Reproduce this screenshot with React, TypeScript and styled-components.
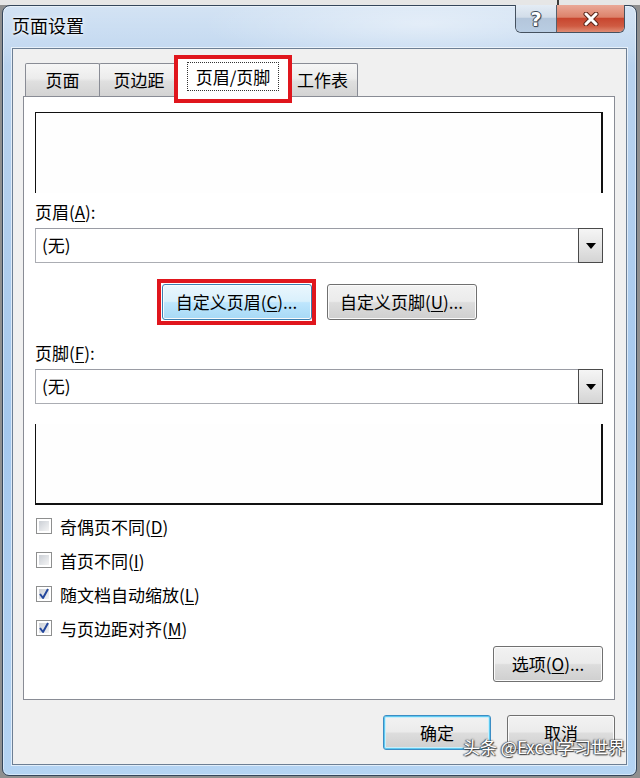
import React from 'react';
import styled, { createGlobalStyle, css } from 'styled-components';

const GlobalStyle = createGlobalStyle`
  html, body { margin: 0; padding: 0; }
  body {
    width: 640px;
    height: 778px;
    overflow: hidden;
    background: #9c9c9c;
    font-family: "Noto Sans CJK SC", "Microsoft YaHei", sans-serif;
    color: #111;
  }
  * { box-sizing: border-box; }
`;

const Page = styled.div`
  position: relative;
  width: 640px;
  height: 778px;
  padding: 5px 3px 2px 2px;
  background:
    linear-gradient(90deg, transparent 557px, #3a3a3a 557px, #3a3a3a 559px, transparent 559px) 0 0 / 100% 5px no-repeat,
    linear-gradient(180deg, #e6e6e6 0, #e6e6e6 5px, #8f8f8f 5px);
`;

const Window = styled.div`
  width: 635px;
  height: 771px;
  border: 1px solid #34465b;
  border-radius: 8px 8px 7px 7px;
  display: flex;
  flex-direction: column;
  background:
    radial-gradient(ellipse 220px 40px at 420px 18px, rgba(255, 255, 255, 0.45), rgba(255, 255, 255, 0)),
    linear-gradient(180deg, rgba(255, 255, 255, 0.35) 0, rgba(255, 255, 255, 0.15) 42px, rgba(255, 255, 255, 0) 60px),
    linear-gradient(180deg, #bcd4ee 0%, #b2cfee 25%, #a4c8ee 55%, #b5d4f3 100%);
  box-shadow: inset 0 0 0 1px rgba(255, 255, 255, 0.45);
`;

const TitleBar = styled.div`
  height: 42px;
  flex: none;
  display: flex;
  justify-content: space-between;
  align-items: flex-start;
  padding: 0 11px 0 9px;
`;

const Title = styled.div`
  margin-top: 7px;
  font-size: 18px;
  line-height: 24px;
  color: #000;
  text-shadow: 0 0 6px rgba(255, 255, 255, 0.9), 0 0 3px rgba(255, 255, 255, 0.9);
`;

const CaptionGroup = styled.div`
  margin-top: -1px;
  display: flex;
  height: 28px;
  border: 1px solid #45515f;
  border-top: none;
  border-radius: 0 0 6px 6px;
  overflow: hidden;
`;

const CaptionButton = styled.div<{ $kind: 'help' | 'close' }>`
  height: 27px;
  display: flex;
  align-items: center;
  justify-content: center;
  ${(p) =>
    p.$kind === 'help'
      ? css`
          width: 41px;
          border-right: 1px solid #56606c;
          background: linear-gradient(180deg, #e4ecf5 0%, #d2dde9 45%, #b4c6db 50%, #b9cde3 100%);
        `
      : css`
          width: 67px;
          background: linear-gradient(180deg, #eaa897 0%, #dc826b 45%, #c8462f 50%, #cf5b42 78%, #e08c74 100%);
        `}
`;

const HelpGlyph = styled.span`
  font-family: "DejaVu Sans", sans-serif;
  font-weight: bold;
  font-size: 19px;
  line-height: 22px;
  color: #fff;
  text-shadow: 1px 0 0 #3d4a5a, -1px 0 0 #3d4a5a, 0 1px 0 #3d4a5a, 0 -1px 0 #3d4a5a, 1px 1px 1px #3d4a5a;
`;

const Client = styled.div`
  margin: 0 9px 10px 9px;
  height: 717px;
  border: 1px solid #6d7f94;
  background: #f0f0f0;
  box-shadow: 0 0 0 1px rgba(255, 255, 255, 0.6);
  padding: 9px 11px 14px 10px;
  display: flex;
  flex-direction: column;
`;

const TabStrip = styled.div`
  position: relative;
  z-index: 2;
  height: 39px;
  margin-bottom: -1px;
  padding-left: 2px;
  display: flex;
  align-items: flex-end;
`;

const highlightFrame = css`
  &::after {
    content: '';
    position: absolute;
    border: 4px solid #e0161d;
    pointer-events: none;
  }
`;

const Tab = styled.div<{ $w: number; $active?: boolean; $highlight?: boolean }>`
  position: relative;
  width: ${(p) => p.$w}px;
  margin-left: -1px;
  &:first-child { margin-left: 0; }
  border: 1px solid #898c95;
  border-bottom: none;
  border-radius: 2px 2px 0 0;
  display: flex;
  align-items: center;
  justify-content: center;
  font-size: 17px;
  color: #000;
  ${(p) =>
    p.$active
      ? css`
          height: 39px;
          margin: 0 -2px 0 -3px;
          z-index: 2;
          background: #fff;
          padding-bottom: 4px;
        `
      : css`
          height: 33px;
          margin-bottom: 1px;
          padding-bottom: 2px;
          background: linear-gradient(180deg, #f6f6f6 0%, #ececec 45%, #dfdfdf 55%, #d3d3d3 100%);
        `}
  ${(p) =>
    p.$highlight &&
    css`
      ${highlightFrame}
      &::after {
        top: -4px;
        left: -3px;
        right: -3px;
        bottom: -6px;
      }
    `}
`;

const FocusLabel = styled.span`
  border: 1px dotted #333;
  padding: 0 8px;
  line-height: 27px;
`;

const Panel = styled.div`
  position: relative;
  z-index: 1;
  height: 604px;
  flex: none;
  border: 1px solid #898c95;
  background: #fff;
  padding: 15px 11px 0 11px;
  display: flex;
  flex-direction: column;
`;

const Preview = styled.div<{ $part: 'header' | 'footer' }>`
  height: 81px;
  flex: none;
  background: #fefefe;
  border-left: 1px solid #111;
  border-right: 2px solid #111;
  ${(p) =>
    p.$part === 'header'
      ? css`
          border-top: 1px solid #111;
        `
      : css`
          margin-top: 20px;
          border-bottom: 2px solid #111;
        `}
`;

const FieldLabel = styled.div<{ $gap: number }>`
  margin-top: ${(p) => p.$gap}px;
  height: 22px;
  line-height: 21px;
  font-size: 17px;
  color: #000;
`;

const Key = styled.span`
  text-decoration: underline;
  text-underline-offset: 2px;
  text-decoration-thickness: 1px;
`;

const Combo = styled.div`
  margin-top: 5px;
  height: 35px;
  flex: none;
  display: flex;
  border: 1px solid #abadb3;
  border-top-color: #9a9ca4;
  background: #fff;
`;

const ComboValue = styled.div`
  flex: 1;
  padding-left: 6px;
  line-height: 32px;
  font-size: 17px;
  color: #000;
`;

const ComboArrow = styled.div`
  width: 25px;
  margin: -1px -1px -1px 0;
  border: 1px solid #4a4a4a;
  background: linear-gradient(180deg, #f5f5f5 0%, #e6e6e6 50%, #d4d4d4 100%);
  display: flex;
  align-items: center;
  justify-content: center;
`;

const ButtonRow = styled.div`
  margin-top: 21px;
  display: flex;
  justify-content: center;
  gap: 15px;
`;

const Button = styled.div<{ $w: number; $h?: number; $state?: 'hot' | 'default'; $highlight?: boolean }>`
  position: relative;
  width: ${(p) => p.$w}px;
  height: ${(p) => p.$h ?? 36}px;
  flex: none;
  border: 1px solid #707070;
  border-radius: 3px;
  display: flex;
  align-items: center;
  justify-content: center;
  padding-bottom: 1px;
  font-size: 17px;
  color: #000;
  background: linear-gradient(180deg, #f2f2f2 0%, #ebebeb 48%, #dddddd 52%, #cfcfcf 100%);
  box-shadow: inset 0 0 0 1px #fbfbfb;
  ${(p) =>
    p.$state === 'hot' &&
    css`
      border-color: #3c7fb1;
      background: linear-gradient(180deg, #eaf6fd 0%, #d9f0fc 48%, #bee6fd 52%, #a7d9f5 100%);
    `}
  ${(p) =>
    p.$state === 'default' &&
    css`
      border-color: #3c8dc4;
      box-shadow: inset 0 0 0 1px #5fc9f0, inset 0 0 0 2px #c9eefb;
    `}
  ${(p) =>
    p.$highlight &&
    css`
      ${highlightFrame}
      &::after {
        top: -6px;
        left: -6px;
        right: -5px;
        bottom: -6px;
      }
    `}
`;

const CheckList = styled.div`
  margin-top: 4px;
  display: flex;
  flex-direction: column;
`;

const CheckRow = styled.div`
  height: 34px;
  display: flex;
  align-items: center;
  gap: 8px;
  padding-left: 1px;
  font-size: 17px;
  color: #000;
`;

const Box = styled.div`
  width: 16px;
  height: 16px;
  border: 1px solid #8e8f8f;
  background: #fff;
  padding: 2px;
  display: flex;
`;

const BoxFill = styled.div`
  flex: 1;
  background: linear-gradient(135deg, #cbcfd5 0%, #e4e6e9 60%, #f4f4f4 100%);
  display: flex;
  align-items: center;
  justify-content: center;
  position: relative;
`;

const OptionsButton = styled(Button)`
  align-self: flex-end;
  margin-top: 1px;
`;

const Footer = styled.div`
  margin-top: 15px;
  display: flex;
  justify-content: flex-end;
  gap: 16px;
`;

const Watermark = styled.div`
  position: absolute;
  right: 15px;
  top: 736px;
  font-size: 17px;
  line-height: 22px;
  color: #fff;
  white-space: nowrap;
  text-shadow: 0 0 2px #333, 1px 1px 1px #444, -1px 0 1px #555;
`;

const CloseIcon = () => (
  <svg width="18" height="14" viewBox="0 0 18 14">
    <path d="M4 2 L14 12 M14 2 L4 12" stroke="#5a2418" strokeWidth="5" strokeLinecap="round" />
    <path d="M4 2 L14 12 M14 2 L4 12" stroke="#ffffff" strokeWidth="3" strokeLinecap="round" />
  </svg>
);

const ArrowIcon = () => (
  <svg width="10" height="6" viewBox="0 0 10 6">
    <polygon points="0,0 10,0 5,6" fill="#000" />
  </svg>
);

const CheckMark = () => (
  <svg width="12" height="12" viewBox="0 0 12 12" style={{ position: 'absolute', left: -1, top: -1 }}>
    <path d="M2 6 L5 10 L10 1" stroke="#24479c" strokeWidth="2" fill="none" strokeLinejoin="round" />
  </svg>
);

type CheckItem = { text: string; key: string; checked: boolean };

const checks: CheckItem[] = [
  { text: '奇偶页不同', key: 'D', checked: false },
  { text: '首页不同', key: 'I', checked: false },
  { text: '随文档自动缩放', key: 'L', checked: true },
  { text: '与页边距对齐', key: 'M', checked: true },
];

export default function App() {
  return (
    <>
      <GlobalStyle />
      <Page>
        <Window>
          <TitleBar>
            <Title>页面设置</Title>
            <CaptionGroup>
              <CaptionButton $kind="help">
                <HelpGlyph>?</HelpGlyph>
              </CaptionButton>
              <CaptionButton $kind="close">
                <CloseIcon />
              </CaptionButton>
            </CaptionGroup>
          </TitleBar>
          <Client>
            <TabStrip>
              <Tab $w={75}>页面</Tab>
              <Tab $w={80}>页边距</Tab>
              <Tab $w={114} $active $highlight>
                <FocusLabel>页眉/页脚</FocusLabel>
              </Tab>
              <Tab $w={71}>工作表</Tab>
            </TabStrip>
            <Panel>
              <Preview $part="header" />
              <FieldLabel $gap={8}>
                页眉(<Key>A</Key>):
              </FieldLabel>
              <Combo>
                <ComboValue>(无)</ComboValue>
                <ComboArrow>
                  <ArrowIcon />
                </ComboArrow>
              </Combo>
              <ButtonRow>
                <Button $w={150} $state="hot" $highlight>
                  自定义页眉(<Key>C</Key>)...
                </Button>
                <Button $w={150}>
                  自定义页脚(<Key>U</Key>)...
                </Button>
              </ButtonRow>
              <FieldLabel $gap={22}>
                页脚(<Key>F</Key>):
              </FieldLabel>
              <Combo>
                <ComboValue>(无)</ComboValue>
                <ComboArrow>
                  <ArrowIcon />
                </ComboArrow>
              </Combo>
              <Preview $part="footer" />
              <CheckList>
                {checks.map((c) => (
                  <CheckRow key={c.key}>
                    <Box>
                      <BoxFill>{c.checked && <CheckMark />}</BoxFill>
                    </Box>
                    <span>
                      {c.text}(<Key>{c.key}</Key>)
                    </span>
                  </CheckRow>
                ))}
              </CheckList>
              <OptionsButton $w={110}>
                选项(<Key>O</Key>)...
              </OptionsButton>
            </Panel>
            <Footer>
              <Button $w={108} $h={35} $state="default">
                确定
              </Button>
              <Button $w={108} $h={35}>
                取消
              </Button>
            </Footer>
          </Client>
        </Window>
        <Watermark>头条 @Excel学习世界</Watermark>
      </Page>
    </>
  );
}
